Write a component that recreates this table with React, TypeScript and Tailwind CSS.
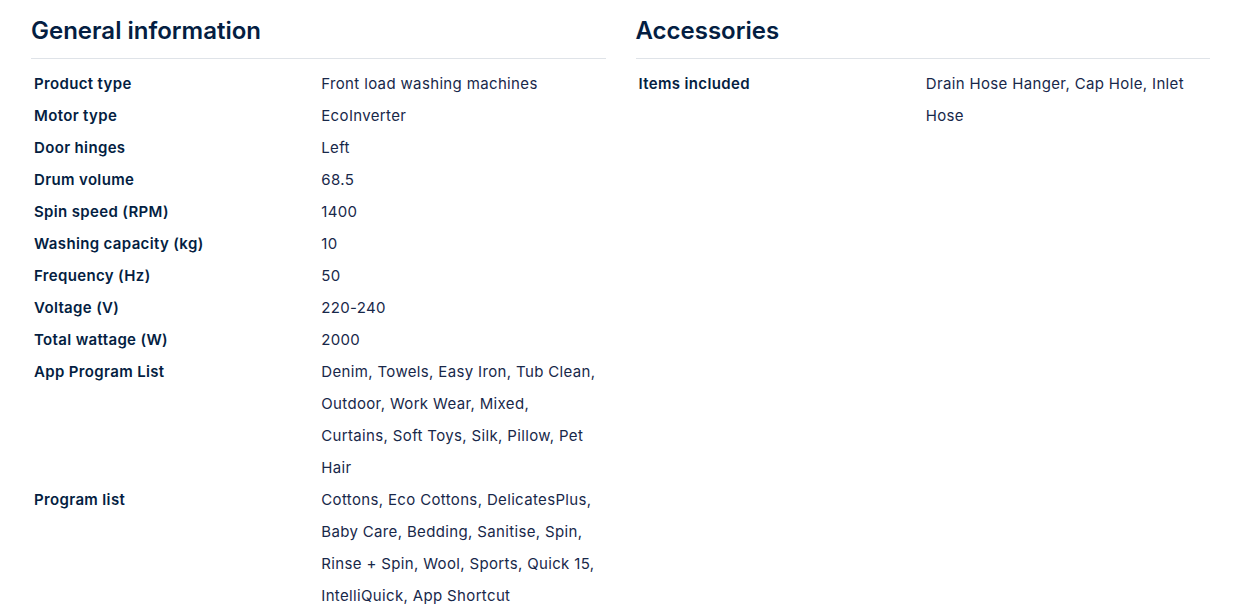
const general: [string, string[]][] = [
  ["Product type", ["Front load washing machines"]],
  ["Motor type", ["EcoInverter"]],
  ["Door hinges", ["Left"]],
  ["Drum volume", ["68.5"]],
  ["Spin speed (RPM)", ["1400"]],
  ["Washing capacity (kg)", ["10"]],
  ["Frequency (Hz)", ["50"]],
  ["Voltage (V)", ["220-240"]],
  ["Total wattage (W)", ["2000"]],
  [
    "App Program List",
    ["Denim, Towels, Easy Iron, Tub Clean,", "Outdoor, Work Wear, Mixed,", "Curtains, Soft Toys, Silk, Pillow, Pet", "Hair"],
  ],
  [
    "Program list",
    ["Cottons, Eco Cottons, DelicatesPlus,", "Baby Care, Bedding, Sanitise, Spin,", "Rinse + Spin, Wool, Sports, Quick 15,", "IntelliQuick, App Shortcut"],
  ],
];

const accessories: [string, string[]][] = [["Items included", ["Drain Hose Hanger, Cap Hole, Inlet", "Hose"]]];

function SpecSection({ title, rows }: { title: string; rows: [string, string[]][] }) {
  return (
    <section className="flex-1 min-w-0">
      <h2 className="text-[24px] leading-[32px] font-semibold text-[#041e42] pt-[15px] pb-[11px] border-b border-[#dfe3e8]">
        {title}
      </h2>
      <div className="pt-[9px]">
        {rows.map(([label, lines]) => (
          <div key={label} className="grid grid-cols-2">
            <div className="pl-[3px] text-[15px] leading-[32px] tracking-[0.35px] font-semibold text-[#041e42]">{label}</div>
            <div className="pl-[3px] text-[15px] leading-[32px] tracking-[0.35px] text-[#18284a]">
              {lines.map((l, i) => (
                <div key={i} className="whitespace-nowrap">{l}</div>
              ))}
            </div>
          </div>
        ))}
      </div>
    </section>
  );
}

export default function App() {
  return (
    <main className="bg-white min-h-screen pl-[31px] pr-[24px] flex gap-[30px]" style={{ fontFamily: "Inter, 'Noto Sans', sans-serif" }}>
      <SpecSection title="General information" rows={general} />
      <SpecSection title="Accessories" rows={accessories} />
    </main>
  );
}
